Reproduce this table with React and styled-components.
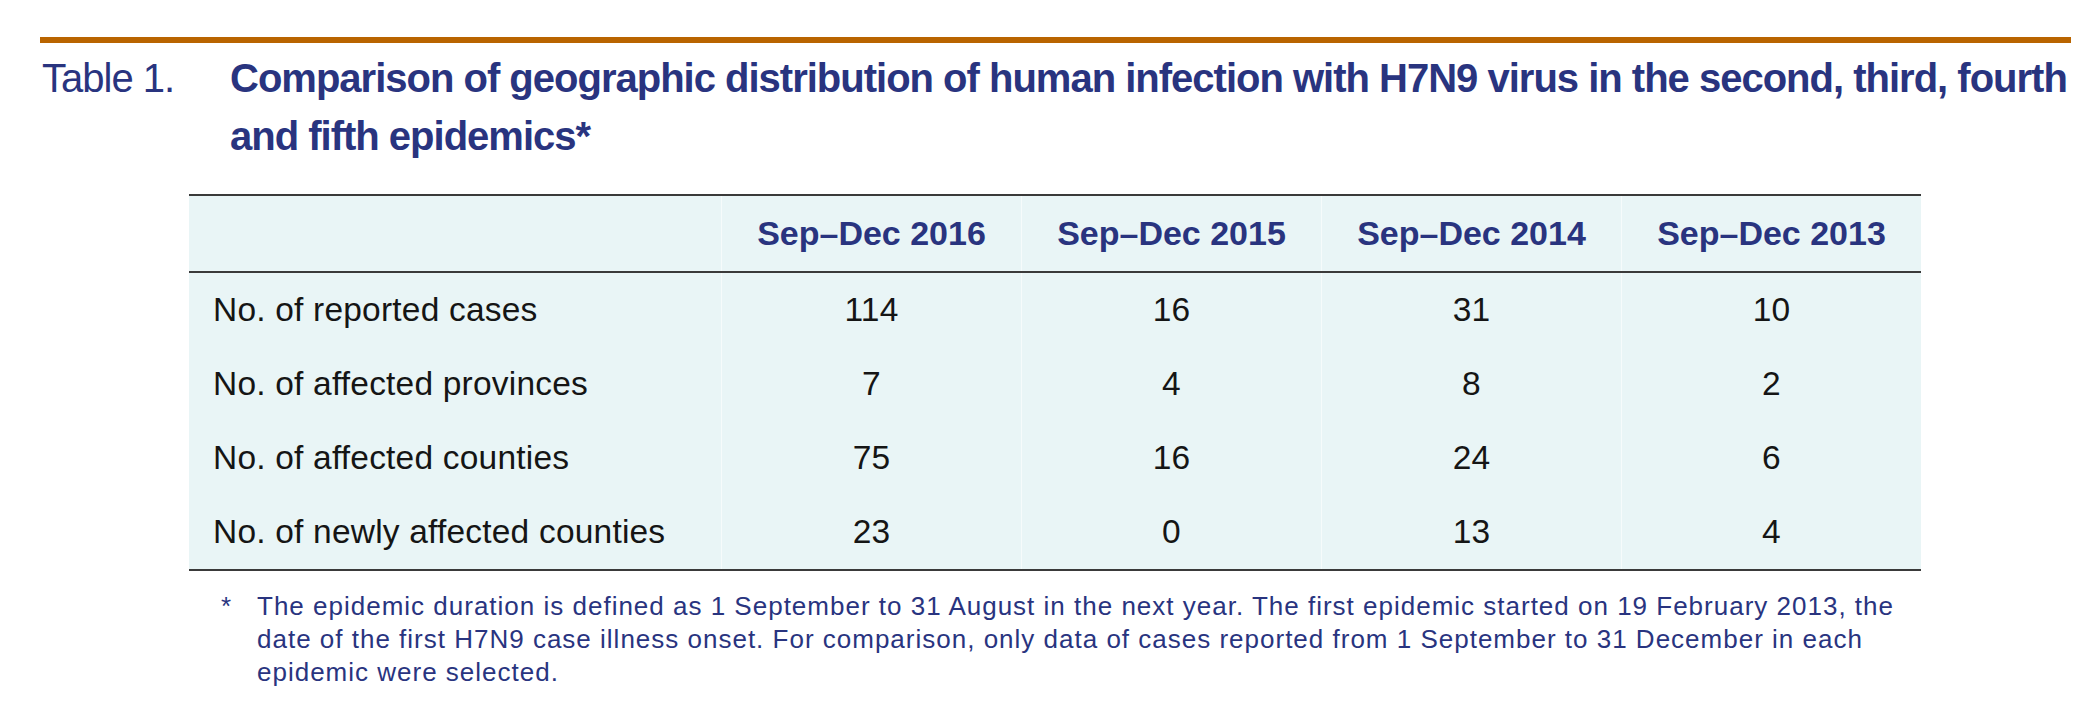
import React from 'react';
import styled, { createGlobalStyle } from 'styled-components';

const navy = '#29347f';

const GlobalStyle = createGlobalStyle`
  body {
    margin: 0;
    background: #ffffff;
    font-family: "Liberation Sans", Arial, sans-serif;
  }
`;

const Page = styled.div`
  width: 2031px;
  padding: 37px 0 0 40px;
`;

const Rule = styled.div`
  height: 6px;
  background: #b96400;
`;

const TitleRow = styled.div`
  display: flex;
  margin-top: 6px;
  color: ${navy};
`;

const TableNo = styled.div`
  flex: none;
  width: 188px;
  padding-left: 2px;
  font-size: 40px;
  letter-spacing: -1px;
  line-height: 58px;
  font-weight: 400;
  white-space: nowrap;
`;

const Heading = styled.h1`
  flex: none;
  margin: 0;
  font-size: 40px;
  letter-spacing: -1px;
  line-height: 58px;
  font-weight: 700;
  white-space: nowrap;
`;

const Table = styled.div`
  margin: 29px 0 0 149px;
  width: 1732px;
  background: #e9f5f6;
  border-top: 2px solid #3a3a3a;
  border-bottom: 2px solid #3a3a3a;
`;

const Row = styled.div`
  display: grid;
  grid-template-columns: 532px repeat(4, 300px);
  height: ${(p) => (p.$head ? '75px' : '74px')};
  border-bottom: ${(p) => (p.$head ? '2px solid #3a3a3a' : 'none')};
`;

const Cell = styled.div`
  display: flex;
  align-items: center;
  justify-content: ${(p) => (p.$label ? 'flex-start' : 'center')};
  padding-left: ${(p) => (p.$label ? '24px' : '0')};
  border-left: ${(p) => (p.$label ? 'none' : '1px solid #f6fbfb')};
  font-size: ${(p) => (p.$head ? '34px' : '33.5px')};
  letter-spacing: ${(p) => (p.$head ? '0' : '0.2px')};
  font-weight: ${(p) => (p.$head ? 700 : 400)};
  color: ${(p) => (p.$head ? navy : '#151515')};
  white-space: nowrap;
`;

const Note = styled.div`
  display: flex;
  margin: 19px 0 0 181px;
  color: ${navy};
  font-size: 26px;
  letter-spacing: 1px;
  line-height: 33px;
`;

const Star = styled.span`
  width: 36px;
  flex: none;
`;

const NoteText = styled.p`
  margin: 0;
  white-space: nowrap;
`;

const periods = ['Sep\u2013Dec 2016', 'Sep\u2013Dec 2015', 'Sep\u2013Dec 2014', 'Sep\u2013Dec 2013'];

const rows = [
  ['No. of reported cases', 114, 16, 31, 10],
  ['No. of affected provinces', 7, 4, 8, 2],
  ['No. of affected counties', 75, 16, 24, 6],
  ['No. of newly affected counties', 23, 0, 13, 4],
];

const App = () => {
  return (
    <>
      <GlobalStyle />
      <Page>
        <Rule />
        <TitleRow>
          <TableNo>Table 1.</TableNo>
          <Heading>
            Comparison of geographic distribution of human infection with H7N9 virus in the second, third, fourth
            <br />
            and fifth epidemics*
          </Heading>
        </TitleRow>

        <Table>
          <Row $head>
            <Cell $label $head />
            {periods.map((p) => (
              <Cell $head key={p}>{p}</Cell>
            ))}
          </Row>
          {rows.map(([label, ...values]) => (
            <Row key={label}>
              <Cell $label>{label}</Cell>
              {values.map((v, i) => (
                <Cell key={i}>{v}</Cell>
              ))}
            </Row>
          ))}
        </Table>

        <Note>
          <Star>*</Star>
          <NoteText>
            The epidemic duration is defined as 1 September to 31 August in the next year. The first epidemic started on 19 February 2013, the
            <br />
            date of the first H7N9 case illness onset. For comparison, only data of cases reported from 1 September to 31 December in each
            <br />
            epidemic were selected.
          </NoteText>
        </Note>
      </Page>
    </>
  );
};

export default App;
